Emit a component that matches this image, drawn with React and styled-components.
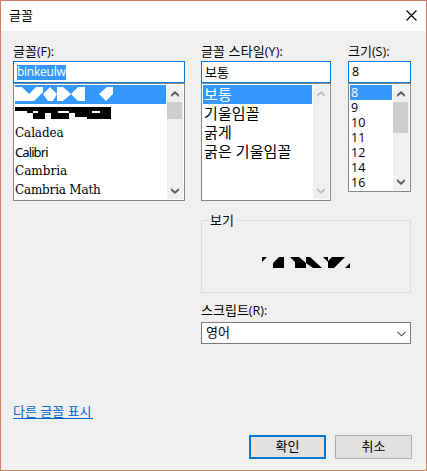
import React from "react";
import styled, { createGlobalStyle } from "styled-components";

const GlobalStyle = createGlobalStyle`
  * { box-sizing: border-box; }
  body { margin: 0; }
`;

const Dialog = styled.div`
  width: 427px;
  height: 471px;
  border: 1px solid #d07f65;
  background: #f0f0f0;
  color: #000;
  font: 13px/16px "Open Sans", "Noto Sans CJK KR", sans-serif;
  display: flex;
  flex-direction: column;
  overflow: hidden;
`;

const TitleBar = styled.header`
  height: 30px;
  background: #fff;
  display: flex;
  justify-content: space-between;
  align-items: center;
  padding: 0 9px 2px 8px;
`;

const Text = styled.span`
  display: block;
  white-space: pre;
  font-size: ${(p) => p.$size || 13}px;
  letter-spacing: ${(p) => p.$track || 0}px;
  line-height: ${(p) => p.$line || 16}px;
`;

const Latin = styled.span`
  font-size: 12.5px;
`;

const Body = styled.main`
  flex: 1;
  display: flex;
  flex-direction: column;
  padding: 12px 14px 11px 12px;
`;

const Columns = styled.div`
  display: flex;
  align-items: flex-start;
  height: 169px;
`;

const Column = styled.section`
  width: ${(p) => p.$width}px;
  margin-right: ${(p) => p.$gap || 0}px;
`;

const Label = styled.div`
  height: 18px;
`;

const Field = styled.div`
  height: 22px;
  border: 1px solid #0078d7;
  background: #fff;
  padding: 0 3px 1px;
  display: flex;
  align-items: center;
`;

const Selection = styled.span`
  display: block;
  height: 15px;
  line-height: 14px;
  width: 49px;
  margin-top: 1px;
  background: #3399ff;
  color: #fff;
  font-size: 12px;
  letter-spacing: -0.25px;
  white-space: nowrap;
`;

const List = styled.div`
  height: ${(p) => p.$height}px;
  border: 1px solid #828790;
  background: #fff;
  padding: 1px;
  display: flex;
`;

const Options = styled.div`
  flex: 1;
`;

const Option = styled.div`
  height: ${(p) => p.$height || 19}px;
  padding-left: ${(p) => p.$inset || 0}px;
  padding-bottom: ${(p) => p.$lift || 0}px;
  background: ${(p) => (p.$selected ? "#3399ff" : "transparent")};
  color: ${(p) => (p.$selected ? "#fff" : "#000")};
  display: flex;
  align-items: center;
  font-family: ${(p) => p.$face || "inherit"};
`;

const Scrollbar = styled.div`
  width: 16px;
  margin-left: 1px;
  background: #f0f0f0;
  display: flex;
  flex-direction: column;
`;

const Thumb = styled.div`
  height: ${(p) => p.$height}px;
  width: 15px;
  background: #cdcdcd;
`;

const ArrowBox = styled.div`
  height: 17px;
  display: flex;
  align-items: center;
  justify-content: center;
`;

const Spacer = styled.div`
  flex: 1;
`;

const Right = styled.div`
  margin-left: 188px;
  width: 210px;
`;

const Group = styled.fieldset`
  height: 81px;
  margin: 0;
  padding: 0;
  border: 1px solid #dcdcdc;
  min-width: 0;
`;

const Legend = styled.legend`
  margin-left: 6px;
  padding: 0 2px;
  height: 16px;
  width: 28px;
`;

const Sample = styled.div`
  padding: 29px 0 0 60px;
  line-height: 0;
`;

const ScriptLabel = styled.div`
  height: 20px;
  margin-top: 9px;
`;

const Combo = styled.div`
  height: 22px;
  border: 1px solid #7a7a7a;
  background: #fff;
  display: flex;
  align-items: center;
  justify-content: space-between;
  padding: 0 4px 2px;

  svg { margin-top: 3px; }
`;

const Link = styled.a`
  align-self: flex-start;
  color: #0066cc;
  height: 16px;
  width: 80px;
  border-bottom: 1px solid #0066cc;
`;

const Actions = styled.footer`
  display: flex;
  justify-content: flex-end;
  gap: 9px;
  margin-top: 16px;
`;

const Button = styled.button`
  width: 77px;
  height: 24px;
  padding: 0 0 2px;
  font: inherit;
  color: #000;
  background: #e1e1e1;
  border: ${(p) => (p.$primary ? "2px solid #0078d7" : "1px solid #adadad")};
  display: flex;
  align-items: center;
  justify-content: center;
`;

const Arrow = ({ down, muted }) => (
  <ArrowBox>
    <svg width="8" height="6" viewBox="0 0 8 6">
      <path
        d={down ? "M0 0L4 3.2L8 0V2.5L4 6L0 2.5Z" : "M0 6L4 2.8L8 6V3.5L4 0L0 3.5Z"}
        fill={muted ? "#bfbfbf" : "#606060"}
      />
    </svg>
  </ArrowBox>
);

const Scroll = ({ thumb = 0, muted }) => (
  <Scrollbar>
    <Arrow muted={muted} />
    <Thumb $height={thumb} />
    <Spacer />
    <Arrow down muted={muted} />
  </Scrollbar>
);

const DiamondGlyphs = () => (
  <svg width="100" height="15" viewBox="0 0 100 15">
    <g fill="#fff">
      <path d="M0 0H7L14 7L21 0H28V5L19 14H0Z" />
      <path d="M35 0L42 7V0H48L56 7L63 0H70V14H63L56 7L48 14H42V7L38 14H33L28 7Z" />
      <path d="M92 0H98V7L91 14L84 7Z" />
    </g>
  </svg>
);

const BlockGlyphs = () => (
  <svg width="97" height="12" viewBox="0 0 97 12" shapeRendering="crispEdges">
    <path d="M0 0H96V12H72V10H60V6H54V12H36V6H30V12H18V6H12V4H0Z" />
    <path d="M18 4H23V6H18ZM43 4H54V6H43ZM77 4H85V6H77Z" fill="#fff" />
  </svg>
);

const SampleGlyphs = () => (
  <svg width="90" height="11" viewBox="0 0 90 11">
    <path d="M0 0H5L0 5ZM17 0H22V11H11V6ZM28 0H37L44 6V0H48L60 11H51L44 6V11H33V5ZM61 0H66V4L70 0H83L72 11H66V5ZM88 6V11H83Z" />
  </svg>
);

const serif = '"DejaVu Serif", serif';
const fonts = [
  { name: "Caladea", face: serif, size: 12, track: -0.1 },
  { name: "Calibri", face: '"Noto Sans", sans-serif', size: 13, track: -0.9 },
  { name: "Cambria", face: serif, size: 12, track: 0 },
  { name: "Cambria Math", face: serif, size: 12, track: -0.2 },
];
const styles = ["보통", "기울임꼴", "굵게", "굵은 기울임꼴"];
const sizes = ["8", "9", "10", "11", "12", "14", "16"];

export default function App() {
  return (
    <>
      <GlobalStyle />
      <Dialog>
        <TitleBar>
          <Text>글꼴</Text>
          <svg width="11" height="11" viewBox="0 0 11 11">
            <path d="M.5 .5L10.5 10.5M10.5 .5L.5 10.5" stroke="#000" strokeWidth="1.1" />
          </svg>
        </TitleBar>
        <Body>
          <Columns>
            <Column $width={172} $gap={16}>
              <Label><Text>글꼴<Latin>(F):</Latin></Text></Label>
              <Field><Selection>binkeulw</Selection></Field>
              <List $height={118}>
                <Options>
                  <Option $selected><DiamondGlyphs /></Option>
                  <Option $lift={2}><BlockGlyphs /></Option>
                  {fonts.map((f) => (
                    <Option key={f.name} $face={f.face}>
                      <Text $size={f.size} $track={f.track}>{f.name}</Text>
                    </Option>
                  ))}
                </Options>
                <Scroll thumb={17} />
              </List>
            </Column>
            <Column $width={130} $gap={17}>
              <Label><Text $track={0.1}>글꼴 스타일<Latin>(Y):</Latin></Text></Label>
              <Field><Text>보통</Text></Field>
              <List $height={118}>
                <Options>
                  {styles.map((s, i) => (
                    <Option key={s} $lift={2} $inset={1} $selected={i === 0}>
                      <Text $size={15} $track={0.1}>{s}</Text>
                    </Option>
                  ))}
                </Options>
                <Scroll muted />
              </List>
            </Column>
            <Column $width={63}>
              <Label><Text>크기<Latin>(S):</Latin></Text></Label>
              <Field><Text $size={12.5}>8</Text></Field>
              <List $height={109}>
                <Options>
                  {sizes.map((s, i) => (
                    <Option key={s} $height={15} $inset={1} $selected={i === 0}>
                      <Text $size={12.5} $line={14}>{s}</Text>
                    </Option>
                  ))}
                </Options>
                <Scroll thumb={31} />
              </List>
            </Column>
          </Columns>
          <Right>
            <Group>
              <Legend><Text>보기</Text></Legend>
              <Sample><SampleGlyphs /></Sample>
            </Group>
            <ScriptLabel><Text>스크립트<Latin>(R):</Latin></Text></ScriptLabel>
            <Combo>
              <Text>영어</Text>
              <svg width="9" height="6" viewBox="0 0 9 6">
                <path d="M.5 .8L4.5 4.8L8.5 .8" fill="none" stroke="#555" strokeWidth="1.1" />
              </svg>
            </Combo>
          </Right>
          <Spacer />
          <Link><Text>다른 글꼴 표시</Text></Link>
          <Actions>
            <Button $primary><Text>확인</Text></Button>
            <Button><Text>취소</Text></Button>
          </Actions>
        </Body>
      </Dialog>
    </>
  );
}
